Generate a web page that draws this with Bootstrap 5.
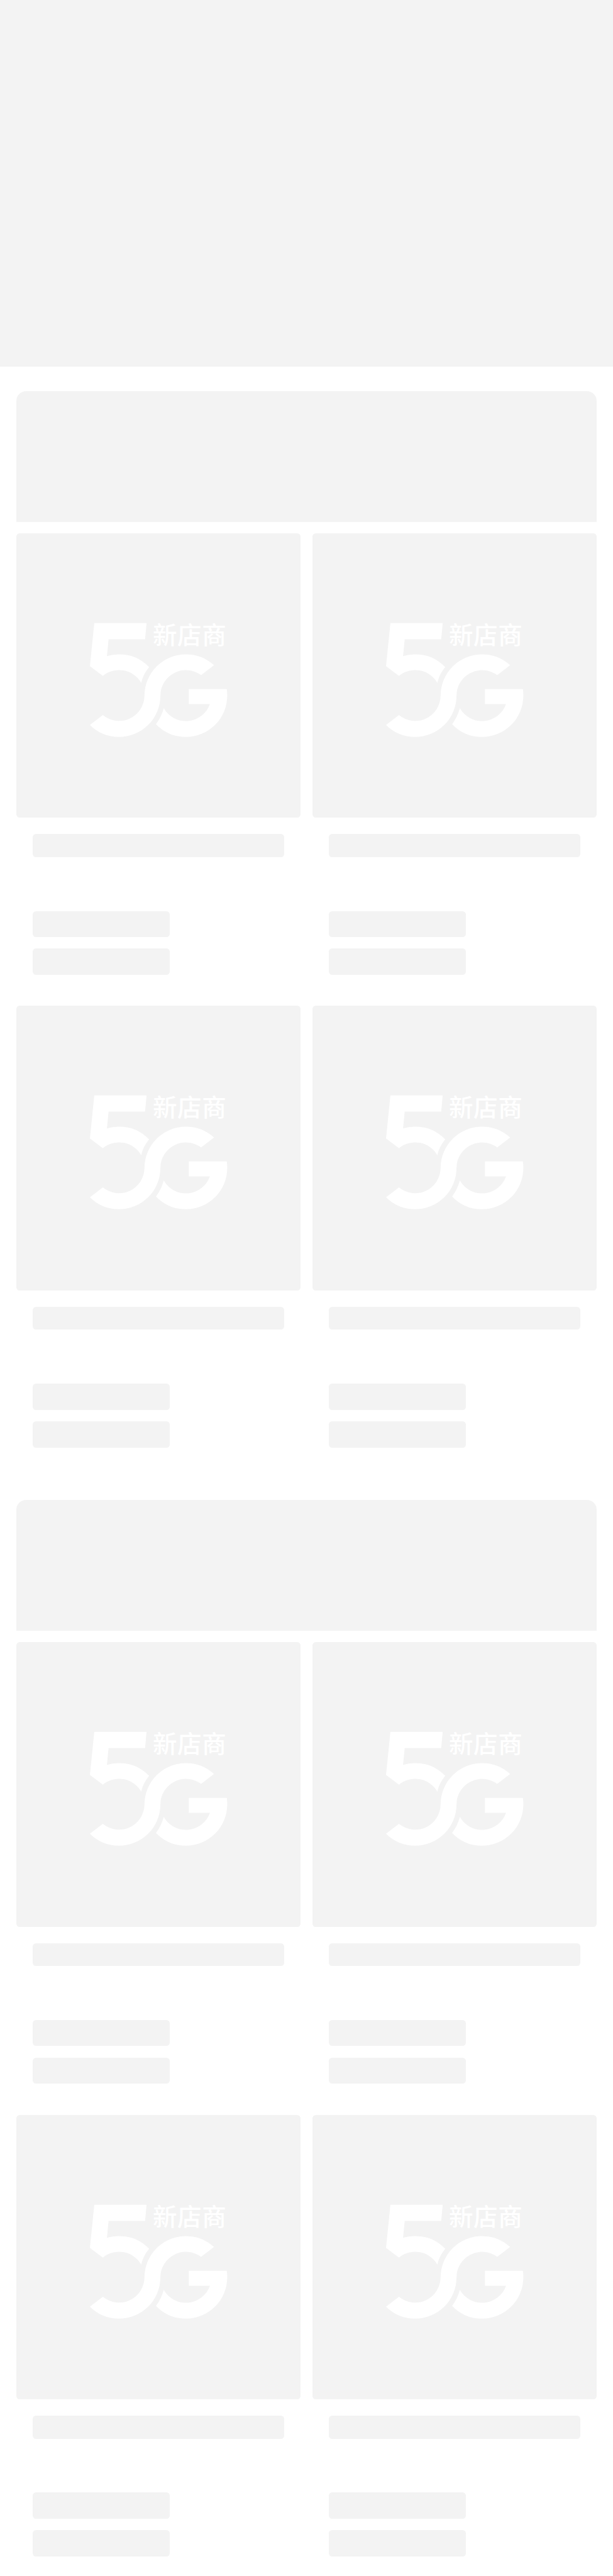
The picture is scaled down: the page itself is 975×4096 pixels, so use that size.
<!DOCTYPE html>
<html lang="zh-CN">
<head>
<meta charset="utf-8">
<meta name="viewport" content="width=device-width, initial-scale=1">
<title>5G新店商</title>
<link href="https://cdn.jsdelivr.net/npm/bootstrap@5.3.0/dist/css/bootstrap.min.css" rel="stylesheet">
<style>
  /* --u: horizontal design unit, --v: vertical design unit */
  :root { --u: .65px; --v: .6502px; --sk: #f3f3f3; }
  body { background: #fff; font-family: "Liberation Sans", "Noto Sans CJK SC", sans-serif; }
  .sk { background: var(--sk); }
  .sk-page { height: 4096px; }
  .sk-hero { height: calc(896 * var(--v)); margin-bottom: calc(60 * var(--v)); }
  .sk-section { padding: 0 calc(40 * var(--u)); margin-bottom: calc(128 * var(--v)); }
  .sk-head { height: calc(320 * var(--v)); margin-bottom: calc(28 * var(--v)); border-radius: calc(24 * var(--u)) calc(24 * var(--u)) 0 0; }
  .sk-goods { --bs-gutter-x: calc(28 * var(--u)); --bs-gutter-y: calc(76 * var(--v)); }
  .sk-thumb, .sk-line, .sk-tag { border-radius: calc(8 * var(--u)); }
  .sk-thumb { height: calc(696 * var(--v)); }
  .sk-info { padding: calc(40 * var(--v)) calc(40 * var(--u)) 0; }
  .sk-line { height: calc(56 * var(--v)); margin-bottom: calc(132 * var(--v)); }
  .sk-tag { height: calc(64 * var(--v)); width: calc(336 * var(--u)); }
  .sk-tag + .sk-tag { margin-top: calc(28 * var(--v)); }
  .sk-logo text { font-family: "Noto Sans CJK SC", sans-serif; font-weight: 500; font-size: 178px; letter-spacing: 3px; }
</style>
</head>
<body>
<svg class="d-none" aria-hidden="true">
  <symbol id="logo" viewBox="-450 -558 2088 2088">
    <path d="M122 101H506L495 219H227L215 343Q258 329 303 330A303 303 0 0 1 525 424C497 457 477 495 467 540A187 187 0 0 0 185 488L90 417Z"/>
    <path d="M185 776A187 187 0 0 0 490.500 633A303.500 303.500 0 0 1 794 330A303 303 0 0 1 1001 410L906 483A187 187 0 0 0 607.500 633A303.500 303.500 0 0 1 303 936A303 303 0 0 1 90 848Z"/>
    <path d="M816 585H1095Q1098 609 1098 633A303 303 0 0 1 794 936A303 303 0 0 1 575 842C600 810 620 770 632 725A187 187 0 0 0 971 695H816Z"/>
  </symbol>
</svg>
<main class="sk-page overflow-hidden">
  <div class="sk sk-hero"></div>
  <section class="sk-section">
    <div class="sk sk-head"></div>
    <div class="row row-cols-2 sk-goods" data-count="4"></div>
  </section>
  <section class="sk-section">
    <div class="sk sk-head"></div>
    <div class="row row-cols-2 sk-goods" data-count="4"></div>
  </section>
</main>
<template id="goods">
  <div class="col">
    <div class="sk sk-thumb overflow-hidden">
      <svg class="sk-logo d-block w-100 h-100" viewBox="-450 -558 2088 2088" fill="#fff">
        <use href="#logo" x="-450" y="-558" width="2088" height="2088"/>
        <text x="551" y="253">新店商</text>
      </svg>
    </div>
    <div class="sk-info">
      <div class="sk sk-line"></div>
      <div class="sk sk-tag"></div>
      <div class="sk sk-tag"></div>
    </div>
  </div>
</template>
<script src="https://cdn.jsdelivr.net/npm/bootstrap@5.3.0/dist/js/bootstrap.bundle.min.js"></script>
<script>
  const goods = document.getElementById('goods');
  document.querySelectorAll('.sk-goods').forEach(list => {
    for (let i = 0; i < Number(list.dataset.count); i++) list.append(goods.content.cloneNode(true));
  });
</script>
</body>
</html>
